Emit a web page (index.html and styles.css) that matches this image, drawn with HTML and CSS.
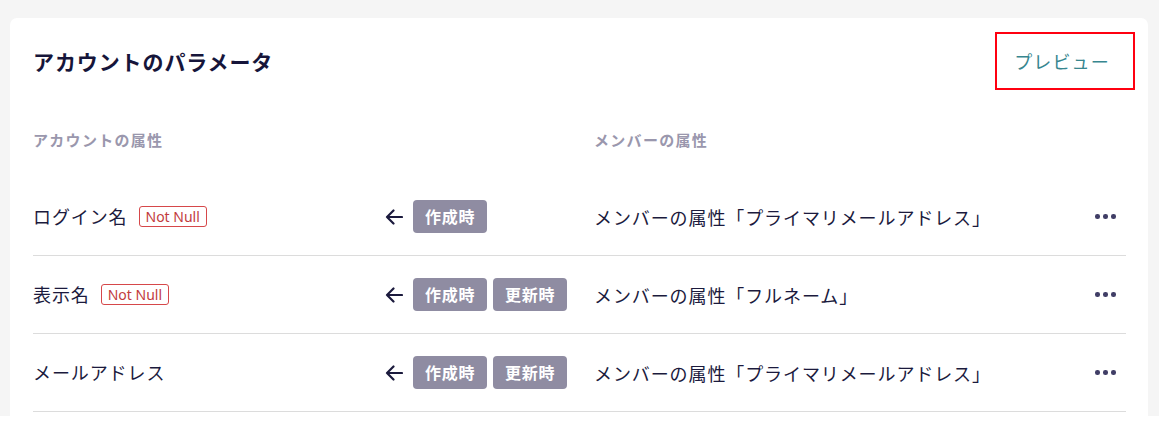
FILE: index.html
```html
<!DOCTYPE html>
<html lang="ja">
<head>
<meta charset="utf-8">
<link rel="stylesheet" href="styles.css">
</head>
<body>
<div class="page">
  <section class="card">
    <header class="card-head">
      <h1 class="title">アカウントのパラメータ</h1>
      <button class="preview">プレビュー</button>
    </header>
    <div class="table">
      <div class="row head">
        <div class="cell">アカウントの属性</div>
        <div class="cell"></div>
        <div class="cell">メンバーの属性</div>
        <div class="cell"></div>
      </div>
      <div class="row">
        <div class="cell name">ログイン名<span class="badge">Not Null</span></div>
        <div class="cell sync">
          <svg class="arrow" viewBox="0 0 18 16" width="18" height="16"><path d="M17 8H2M8.5 1.5L2 8l6.5 6.5" fill="none" stroke="#1b1a3d" stroke-width="2.2" stroke-linecap="round" stroke-linejoin="round"/></svg>
          <span class="tag">作成時</span>
        </div>
        <div class="cell">メンバーの属性「プライマリメールアドレス」</div>
        <div class="cell more"><span class="dot"></span><span class="dot"></span><span class="dot"></span></div>
      </div>
      <div class="row">
        <div class="cell name">表示名<span class="badge">Not Null</span></div>
        <div class="cell sync">
          <svg class="arrow" viewBox="0 0 18 16" width="18" height="16"><path d="M17 8H2M8.5 1.5L2 8l6.5 6.5" fill="none" stroke="#1b1a3d" stroke-width="2.2" stroke-linecap="round" stroke-linejoin="round"/></svg>
          <span class="tag">作成時</span><span class="tag">更新時</span>
        </div>
        <div class="cell">メンバーの属性「フルネーム」</div>
        <div class="cell more"><span class="dot"></span><span class="dot"></span><span class="dot"></span></div>
      </div>
      <div class="row">
        <div class="cell name">メールアドレス</div>
        <div class="cell sync">
          <svg class="arrow" viewBox="0 0 18 16" width="18" height="16"><path d="M17 8H2M8.5 1.5L2 8l6.5 6.5" fill="none" stroke="#1b1a3d" stroke-width="2.2" stroke-linecap="round" stroke-linejoin="round"/></svg>
          <span class="tag">作成時</span><span class="tag">更新時</span>
        </div>
        <div class="cell">メンバーの属性「プライマリメールアドレス」</div>
        <div class="cell more"><span class="dot"></span><span class="dot"></span><span class="dot"></span></div>
      </div>
    </div>
  </section>
</div>
</body>
</html>
```

FILE: styles.css
```css
html, body {
  margin: 0;
  padding: 0;
  background: #ffffff;
}
body {
  font-family: "Noto Sans CJK JP", "Noto Sans", sans-serif;
  color: #1b1a3d;
}
.page {
  height: 416px;
  box-sizing: border-box;
  background: #f5f5f5;
  padding: 18px 11px 0 10px;
  overflow: hidden;
}
.card {
  background: #ffffff;
  border-radius: 7px 7px 0 0;
  height: 420px;
  padding: 14px 22px 0 23px;
  box-sizing: border-box;
}
.card-head {
  display: flex;
  justify-content: space-between;
  align-items: center;
  height: 58px;
}
.title {
  margin: 0;
  font-size: 21px;
  font-weight: 700;
  color: #16153a;
  letter-spacing: 0.9px;
}
.preview {
  width: 140px;
  height: 58px;
  margin-right: -9px;
  border: 2px solid #ff0010;
  background: #ffffff;
  color: #37868f;
  font-family: "Noto Sans CJK JP", sans-serif;
  font-size: 18px;
  font-weight: 400;
  letter-spacing: 1.1px;
  padding: 0 6px 0 0;
}
.table {
  margin-top: 37px;
}
.row {
  display: grid;
  grid-template-columns: 352px 209px 1fr 31px;
  align-items: center;
  height: 77px;
  border-bottom: 1px solid #dcdcdc;
  font-size: 18px;
  letter-spacing: 0.9px;
}
.row.head {
  height: 24px;
  border-bottom: none;
  margin-bottom: 27px;
  font-size: 15px;
  font-weight: 700;
  color: #9a97ad;
  letter-spacing: 1.3px;
}
.cell {
  display: flex;
  align-items: center;
  white-space: nowrap;
}
.name {
  padding-bottom: 1px;
}
.badge {
  margin-left: 11px;
  height: 21px;
  box-sizing: border-box;
  padding: 0 6px;
  border: 1px solid #d6484a;
  border-radius: 3px;
  color: #c23b3d;
  font-family: "Noto Sans", sans-serif;
  font-size: 14px;
  letter-spacing: 0;
  line-height: 19px;
}
.sync {
  gap: 6px;
}
.arrow {
  margin-right: 4px;
}
.tag {
  height: 33px;
  padding: 0 12px;
  border-radius: 4px;
  background: #8f8ca2;
  color: #ffffff;
  font-size: 16px;
  font-weight: 700;
  letter-spacing: 0.7px;
  line-height: 33px;
}
.more {
  gap: 3.5px;
}
.dot {
  width: 4.5px;
  height: 4.5px;
  border-radius: 50%;
  background: #403e66;
}
```
